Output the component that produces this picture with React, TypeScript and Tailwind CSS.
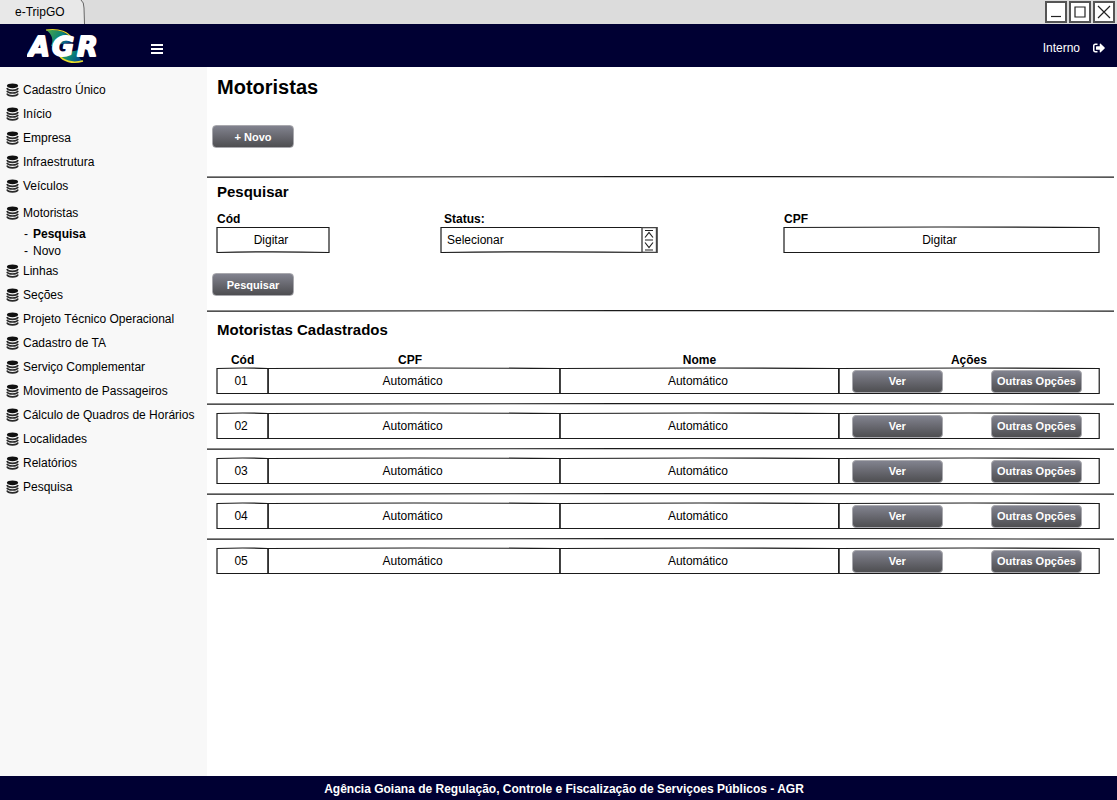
import React, { type ReactNode } from "react";
import { FaSignOutAlt } from "react-icons/fa";

const menuBefore = ["Cadastro Único", "Início", "Empresa", "Infraestrutura", "Veículos"];
const menuAfter = [
  "Linhas",
  "Seções",
  "Projeto Técnico Operacional",
  "Cadastro de TA",
  "Serviço Complementar",
  "Movimento de Passageiros",
  "Cálculo de Quadros de Horários",
  "Localidades",
  "Relatórios",
  "Pesquisa",
];
const drivers = ["01", "02", "03", "04", "05"];

/* Slightly bowed hand-drawn frame that stretches over its parent. */
function SketchFrame({ bow = "bottom" }: { bow?: "top" | "bottom" | "both" }) {
  const top = bow === "bottom" ? 2 : -2;
  const bottom = bow === "bottom" ? 93 : 98;
  return (
    <svg
      className="pointer-events-none absolute inset-0 h-full w-full overflow-visible"
      viewBox="0 0 100 100"
      preserveAspectRatio="none"
      aria-hidden="true"
    >
      <path
        d={`M0 2 Q50 ${top} 100 2 V98 Q50 ${bottom} 0 98 Z`}
        fill="none"
        stroke="#1a1a1a"
        strokeWidth="1.2"
        vectorEffect="non-scaling-stroke"
      />
    </svg>
  );
}

function SketchRule() {
  return (
    <svg className="block h-[2px] w-full" viewBox="0 0 100 2" preserveAspectRatio="none" aria-hidden="true">
      <path
        d="M0 1.1 Q50 0 100 1.1"
        fill="none"
        stroke="#1a1a1a"
        strokeWidth="1.2"
        vectorEffect="non-scaling-stroke"
      />
    </svg>
  );
}

function DatabaseIcon() {
  return (
    <svg width="13" height="14" viewBox="0 0 13 14" className="shrink-0" aria-hidden="true">
      <ellipse cx="6.5" cy="2.8" rx="5.6" ry="2.4" fill="#111" />
      <g fill="none" stroke="#2a2a2a" strokeWidth="1.7">
        <path d="M1 5 Q1.6 7.3 6.5 7.3 Q11.4 7.3 12 5" />
        <path d="M1 7.8 Q1.6 10 6.5 10 Q11.4 10 12 7.8" />
        <path d="M1 10.5 Q1.6 12.8 6.5 12.8 Q11.4 12.8 12 10.5" />
      </g>
    </svg>
  );
}

function Logo() {
  return (
    <svg width="76" height="36" viewBox="0 0 76 36" role="img" aria-label="AGR">
      <defs>
        <linearGradient id="leaf" x1="0" y1="0" x2="1" y2="0.4">
          <stop offset="0" stopColor="#4fa645" />
          <stop offset="0.6" stopColor="#0b8577" />
          <stop offset="1" stopColor="#07518a" />
        </linearGradient>
      </defs>
      <path d="M19 2 C32 1 43 5 46 14 L24 18 C27 12 25 6 19 2 Z" fill="url(#leaf)" />
      <path d="M19 2 C32 0 42 4 46 12" fill="none" stroke="#e8dc2a" strokeWidth="1.2" />
      <path d="M56 33 C45 36 36 33 32 26 L52 22 C51 27 52 31 56 33 Z" fill="url(#leaf)" />
      <path d="M56 33 C45 36 36 33 32 27" fill="none" stroke="#e8dc2a" strokeWidth="1.6" />
      <g
        fill="#fff"
        stroke="#fff"
        strokeWidth="1.8"
        strokeLinejoin="round"
        fontFamily="'DejaVu Sans', Verdana, sans-serif"
        fontWeight="700"
        fontStyle="italic"
        fontSize="27"
      >
        <text x="2" y="28">A</text>
        <text x="25" y="28">G</text>
        <text x="50" y="28">R</text>
      </g>
    </svg>
  );
}

function WindowButton({ label, children }: { label: string; children: ReactNode }) {
  return (
    <button type="button" aria-label={label} className="flex h-[22px] w-[22px] items-center justify-center border-2 border-[#555] bg-white">
      <svg width="14" height="14" viewBox="0 0 14 14" fill="none" stroke="#222" strokeWidth="1.2" aria-hidden="true">
        {children}
      </svg>
    </button>
  );
}

function ActionButton({ className, children }: { className: string; children: ReactNode }) {
  return (
    <button
      type="button"
      className={`h-[23px] rounded-[4px] border border-[#a9a9ae] bg-linear-to-b from-[#82838f] to-[#4e4e51] text-center text-[11px] leading-4 font-bold whitespace-nowrap text-white ${className}`}
    >
      {children}
    </button>
  );
}

function MenuItem({ children }: { children: ReactNode }) {
  return (
    <a href="#" className="flex h-6 items-center gap-1 whitespace-nowrap">
      <DatabaseIcon />
      {children}
    </a>
  );
}

export default function App() {
  return (
    <div className="flex min-h-screen flex-col bg-white font-['Liberation_Sans',Arial,sans-serif] text-[12px] leading-4 text-black">
      <div className="flex h-6 items-center justify-between bg-[#dcdcdc] pr-[2px]">
        <div className="relative flex h-6 w-[85px] items-center bg-[#e8e8e8] pl-[15px]">
          e-TripGO
          <svg className="absolute top-0 right-0" width="5" height="24" viewBox="0 0 5 24" aria-hidden="true">
            <path d="M1 0 Q4 2 4 8 L4.5 24 H5 V0 Z" fill="#dcdcdc" />
            <path d="M1 0 Q4 2 4 8 L4.5 24" fill="none" stroke="#666" />
          </svg>
        </div>
        <div className="flex gap-[2px]">
          <WindowButton label="Minimizar">
            <path d="M2 11.5 H12" />
          </WindowButton>
          <WindowButton label="Maximizar">
            <path d="M2 2 H12 V12 H2 Z" />
          </WindowButton>
          <WindowButton label="Fechar">
            <path d="M1 1 L13 13 M13 1 L1 13" />
          </WindowButton>
        </div>
      </div>

      <header className="flex h-[43px] items-center bg-[#000033] pr-3 pl-[27px] text-white">
        <Logo />
        <button type="button" aria-label="Menu" className="ml-12 pt-[6px]">
          <svg width="12" height="10" viewBox="0 0 12 10" fill="#fff" aria-hidden="true">
            <path d="M0 0h12v2H0zM0 4h12v2H0zM0 8h12v2H0z" />
          </svg>
        </button>
        <div className="ml-auto flex items-center gap-[13px] pt-1">
          <span>Interno</span>
          <a href="#" aria-label="Sair">
            <FaSignOutAlt size={12} />
          </a>
        </div>
      </header>

      <div className="flex flex-1">
        <nav className="w-[207px] shrink-0 bg-[#f8f8f8] pt-[11px] pl-[6px]">
          <ul>
            {menuBefore.map((item) => (
              <li key={item}>
                <MenuItem>{item}</MenuItem>
              </li>
            ))}
            <li className="pt-[3px]">
              <MenuItem>Motoristas</MenuItem>
              <ul className="pl-[18px]">
                <li>
                  <a href="#" className="flex h-[17px] items-center gap-[5px]">
                    <span>-</span>
                    <strong>Pesquisa</strong>
                  </a>
                </li>
                <li>
                  <a href="#" className="flex h-[17px] items-center gap-[5px]">
                    <span>-</span>
                    Novo
                  </a>
                </li>
              </ul>
            </li>
            {menuAfter.map((item) => (
              <li key={item}>
                <MenuItem>{item}</MenuItem>
              </li>
            ))}
          </ul>
        </nav>

        <main className="min-w-0 flex-1 pr-[3px]">
          <div className="px-[5px] pt-2">
            <h1 className="pl-[5px] text-[20px] leading-6 font-bold">Motoristas</h1>
            <ActionButton className="mt-[26px] w-[82px]">+ Novo</ActionButton>
          </div>

          <div className="mt-7">
            <SketchRule />
          </div>

          <form className="pr-[15px] pl-[10px]" onSubmit={(e) => e.preventDefault()}>
            <h2 className="pt-1 text-[15px] leading-5 font-bold">Pesquisar</h2>
            <div className="mt-[9px] grid grid-cols-[224fr_343fr_315fr] font-normal">
              <div>
                <label htmlFor="cod" className="block font-bold">Cód</label>
                <div className="relative h-[26px] w-1/2">
                  <input id="cod" type="text" placeholder="Digitar" className="h-full w-full bg-transparent pr-1 text-center outline-none placeholder:text-black" />
                  <SketchFrame bow="bottom" />
                </div>
              </div>
              <div>
                <label htmlFor="status" className="block pl-[3px] font-bold">Status:</label>
                <div className="relative h-[26px] w-[63%]">
                  <select id="status" className="h-full w-full appearance-none bg-transparent pl-[6px] outline-none">
                    <option>Selecionar</option>
                  </select>
                  <SketchFrame bow="bottom" />
                  <svg className="pointer-events-none absolute top-0 right-0" width="16" height="26" viewBox="0 0 16 26" fill="none" stroke="#222" strokeWidth="1.2" aria-hidden="true">
                    <path d="M1 0.5 H15.5 V25.5 H1 Z" stroke="#444" strokeWidth="1.4" />
                    <path d="M4 3.5 H12 M4 10.5 L8 5.5 L12 10.5 M4 13 H12 M4 15.5 L8 20.5 L12 15.5 M4 23 H12" />
                  </svg>
                </div>
              </div>
              <div>
                <label htmlFor="cpf" className="block font-bold">CPF</label>
                <div className="relative h-[26px]">
                  <input id="cpf" type="text" placeholder="Digitar" className="h-full w-full bg-transparent pr-1 text-center outline-none placeholder:text-black" />
                  <SketchFrame bow="top" />
                </div>
              </div>
            </div>
            <ActionButton className="mt-5 -ml-[5px] w-[82px]">Pesquisar</ActionButton>
          </form>

          <div className="mt-[14px]">
            <SketchRule />
          </div>

          <section className="pr-[15px] pl-[10px]">
            <h2 className="pt-2 text-[15px] leading-5 font-bold">Motoristas Cadastrados</h2>
            <table className="mt-3 w-full table-fixed border-collapse text-center">
              <colgroup>
                <col className="w-[5.8%]" />
                <col className="w-[33.1%]" />
                <col className="w-[31.6%]" />
                <col className="w-[29.5%]" />
              </colgroup>
              <thead>
                <tr>
                  <th className="p-0">Cód</th>
                  <th className="p-0 pr-2">CPF</th>
                  <th className="p-0">Nome</th>
                  <th className="p-0">Ações</th>
                </tr>
              </thead>
              <tbody>
                {drivers.map((id, i) => (
                  <React.Fragment key={id}>
                    {i > 0 && (
                      <tr>
                        <td colSpan={4} className="h-[19px] p-0 align-middle">
                          <div className="-mr-[15px] -ml-[10px]">
                            <SketchRule />
                          </div>
                        </td>
                      </tr>
                    )}
                    <tr className="h-[26px]">
                      <td className="relative p-0 pr-[3px]">
                        {id}
                        <SketchFrame bow="both" />
                      </td>
                      <td className="relative p-0 pr-[3px]">
                        Automático
                        <SketchFrame bow="both" />
                      </td>
                      <td className="relative p-0 pr-[3px]">
                        Automático
                        <SketchFrame bow="both" />
                      </td>
                      <td className="relative p-0">
                        <div className="flex justify-between pr-[17px] pl-[13px]">
                          <ActionButton className="w-[91px]">Ver</ActionButton>
                          <ActionButton className="w-[91px]">Outras Opções</ActionButton>
                        </div>
                        <SketchFrame bow="both" />
                      </td>
                    </tr>
                  </React.Fragment>
                ))}
              </tbody>
            </table>
          </section>
        </main>
      </div>

      <footer className="flex h-6 items-center justify-center bg-[#000033] pt-[2px] pl-[11px] font-bold text-white">
        Agência Goiana de Regulação, Controle e Fiscalização de Serviçoes Públicos - AGR
      </footer>
    </div>
  );
}
